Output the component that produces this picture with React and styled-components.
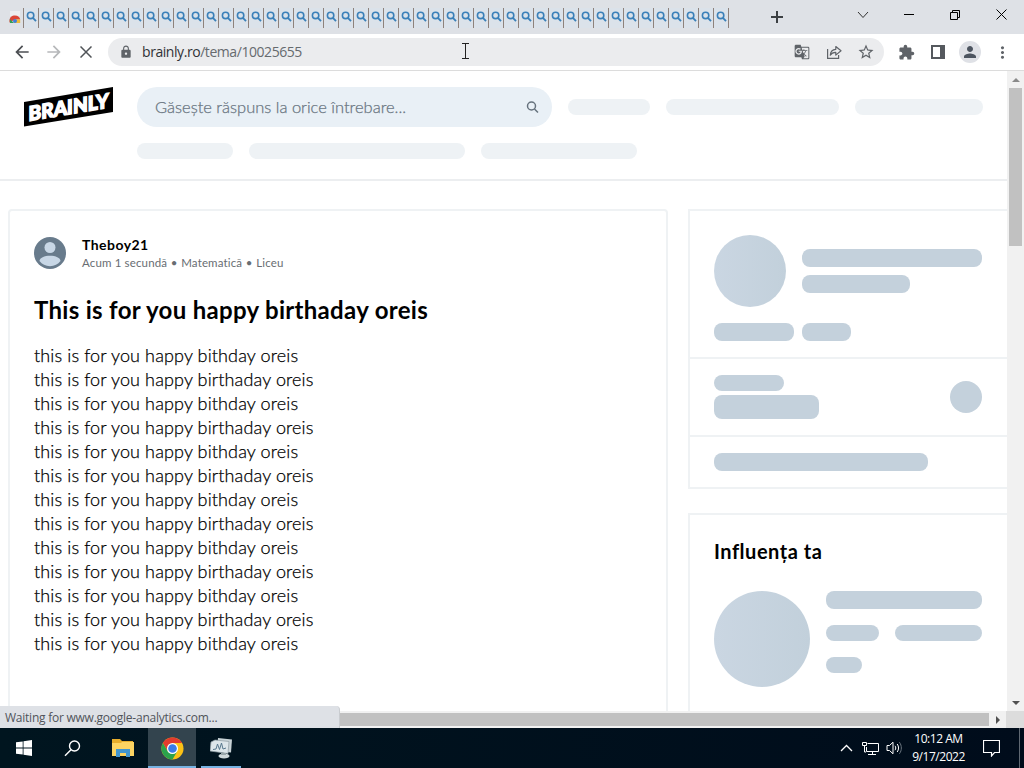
import React from 'react';
import styled, { createGlobalStyle } from 'styled-components';
import { MdArrowBack, MdArrowForward, MdLock, MdGTranslate, MdStarBorder, MdExtension, MdPerson, MdMoreVert } from 'react-icons/md';

const GlobalStyle = createGlobalStyle`
  * {
    box-sizing: border-box;
  }
  body {
    margin: 0;
    overflow: hidden;
  }
  svg {
    display: block;
    flex: none;
  }
`;

const Screen = styled.div`
  position: relative;
  display: flex;
  flex-direction: column;
  width: 1024px;
  height: 768px;
  overflow: hidden;
  background: #fff;
  font-family: 'Open Sans', 'Noto Sans', sans-serif;
`;

/* browser chrome */

const TabStrip = styled.div`
  display: flex;
  flex: none;
  height: 34px;
  background: #dee1e6;
`;

const FirstTab = styled.div`
  display: flex;
  align-items: center;
  justify-content: flex-end;
  width: 23px;
  padding-right: 2px;
`;

const Tabs = styled.div`
  display: flex;
  height: 20px;
  margin-top: 8px;
  border-left: 1px solid #8e827c;
`;

const Tab = styled.div`
  display: flex;
  align-items: flex-start;
  justify-content: center;
  width: 15px;
  padding-top: 3px;
  background: #dbe2ea;
  border-right: 1px solid #8e827c;
`;

const NewTab = styled.div`
  display: flex;
  align-items: center;
  justify-content: center;
  width: 96px;
`;

const WindowButtons = styled.div`
  display: flex;
  height: 29px;
  margin-left: auto;
`;

const WindowButton = styled.div`
  display: flex;
  align-items: center;
  justify-content: center;
  width: 46px;
`;

const Toolbar = styled.div`
  display: flex;
  flex: none;
  align-items: center;
  height: 37px;
  padding: 0 6px;
  border-bottom: 1px solid #dcdcdc;
`;

const Slot = styled.div`
  display: flex;
  align-items: center;
  justify-content: center;
  width: 32px;
  height: 28px;
  color: ${({ $color }) => $color || '#5f6368'};
`;

const Omnibox = styled.div`
  display: flex;
  flex: 1;
  align-items: center;
  height: 28px;
  margin: 0 6px;
  padding: 0 2px 0 11px;
  border-radius: 14px;
  background: #ebecee;
  color: #5f6368;
`;

const Url = styled.div`
  flex: 1;
  margin-left: 9px;
  padding-bottom: 1px;
  font-size: 14px;
  letter-spacing: -0.44px;
  color: #666a6e;

  span {
    color: #303236;
  }
`;

const Profile = styled.div`
  display: flex;
  align-items: center;
  justify-content: center;
  width: 22px;
  height: 22px;
  border-radius: 50%;
  background: #dfe1e6;
  color: #4d5560;
`;

/* page */

const Viewport = styled.div`
  display: flex;
  flex: none;
  height: 640px;
`;

const Page = styled.div`
  width: 1007px;
  overflow: hidden;
  font-family: Lato, sans-serif;
`;

const Header = styled.header`
  display: flex;
  height: 110px;
  padding: 16px 24px 0;
  border-bottom: 2px solid #eceef0;
`;

const Nav = styled.div`
  display: flex;
  flex-wrap: wrap;
  align-content: flex-start;
  align-items: center;
  gap: 16px;
  width: 847px;
  margin-left: 24px;
`;

const SearchBox = styled.div`
  display: flex;
  align-items: center;
  justify-content: space-between;
  width: 415px;
  height: 40px;
  padding: 0 13px 0 18px;
  border-radius: 20px;
  background: #e9f0f6;
  color: #687480;
  font-size: 16.5px;
  font-weight: 300;
  -webkit-text-stroke: 0.25px #687480;
`;

const Bar = styled.div`
  flex: none;
  width: ${({ $w }) => $w}px;
  height: ${({ $h }) => $h || 18}px;
  border-radius: ${({ $r }) => $r || 8}px;
  background: ${({ $light }) => ($light ? '#eef2f5' : '#c4d1dc')};
`;

const Circle = styled.div`
  flex: none;
  width: ${({ $size }) => $size}px;
  height: ${({ $size }) => $size}px;
  border-radius: 50%;
  background: ${({ $shade }) => ($shade ? 'linear-gradient(90deg, #cad6e2, #c2d0db)' : '#c4d1dc')};
`;

const Columns = styled.div`
  display: flex;
  gap: 20px;
  padding: 28px 0 0 8px;
`;

const Question = styled.main`
  flex: none;
  width: 660px;
  height: 700px;
  padding: 26px 24px;
  border: 2px solid #eff2f4;
  border-radius: 4px;
`;

const Author = styled.div`
  display: flex;
  gap: 16px;
  height: 34px;
`;

const Name = styled.div`
  margin-top: -1px;
  font-size: 14px;
  line-height: 18px;
  font-weight: 700;
  letter-spacing: 0.45px;
`;

const Meta = styled.div`
  display: flex;
  font-size: 11.5px;
  line-height: 17px;
  letter-spacing: 0.15px;
  color: #686d72;

  span + span::before {
    content: '•';
    display: inline-block;
    width: 14px;
    text-align: center;
  }
`;

const Title = styled.h1`
  margin: 23px 0 17px;
  font-size: 24px;
  line-height: 32px;
  font-weight: 700;
  letter-spacing: 0.3px;
  white-space: nowrap;
`;

const Body = styled.div`
  font-size: 18px;
  line-height: 24px;
  font-weight: 300;
  letter-spacing: 0.13px;
  color: #000;
  -webkit-text-stroke: 0.25px #000;
`;

const Aside = styled.aside`
  display: flex;
  flex: none;
  flex-direction: column;
  gap: 24px;
  width: 340px;
`;

const Box = styled.section`
  border: 2px solid #eff2f4;
  border-right: 0;
  height: ${({ $h }) => $h}px;
`;

const Section = styled.div`
  display: flex;
  flex-direction: ${({ $row }) => ($row ? 'row' : 'column')};
  justify-content: ${({ $row }) => ($row ? 'space-between' : 'flex-start')};
  align-items: ${({ $row }) => ($row ? 'center' : 'stretch')};
  height: ${({ $h }) => $h}px;
  padding: ${({ $pad }) => $pad};
  gap: 16px;

  & + & {
    border-top: 2px solid #eff2f4;
  }
`;

const Row = styled.div`
  display: flex;
  gap: ${({ $gap }) => $gap || 16}px;
`;

const Stack = styled.div`
  display: flex;
  flex-direction: column;
  gap: ${({ $gap }) => $gap}px;
  padding-top: ${({ $top }) => $top || 0}px;
`;

const BoxTitle = styled.h2`
  margin: -2px 0 26px;
  font-size: 20px;
  line-height: 28px;
  font-weight: 700;
  letter-spacing: 0.52px;
`;

/* scrollbars */

const VScroll = styled.div`
  display: flex;
  flex-direction: column;
  align-items: center;
  justify-content: space-between;
  width: 17px;
  background: #f1f1f1;
`;

const VThumb = styled.div`
  width: 13px;
  height: 158px;
  margin-bottom: auto;
  background: #c1c1c1;
`;

const ArrowBox = styled.div`
  display: flex;
  align-items: center;
  justify-content: center;
  width: 17px;
  height: 17px;
`;

const HScroll = styled.div`
  display: flex;
  flex: none;
  align-items: center;
  height: 17px;
  background: #f1f1f1;
`;

const HThumb = styled.div`
  width: 972px;
  height: 13px;
  margin-left: 17px;
  background: #c1c1c1;
`;

const Corner = styled.div`
  width: 18px;
  height: 17px;
  background: #dcdcdc;
`;

const StatusBubble = styled.div`
  position: absolute;
  left: 0;
  top: 706px;
  width: 340px;
  height: 22px;
  padding-left: 5px;
  border-right: 1px solid #c9ccd0;
  border-radius: 0 4px 0 0;
  background: #dee1e6;
  color: #50545a;
  font-size: 12px;
  line-height: 23px;
  letter-spacing: -0.24px;
`;

/* taskbar */

const Taskbar = styled.div`
  display: flex;
  flex: none;
  height: 40px;
  background: linear-gradient(90deg, #00151f, #000c1b);
  color: #fff;
`;

const TaskButton = styled.div`
  display: flex;
  align-items: center;
  justify-content: center;
  width: ${({ $w }) => $w || 48}px;
  height: 40px;
  margin-right: ${({ $mr }) => $mr || 0}px;
  padding-top: ${({ $open }) => ($open ? 2 : 0)}px;
  background: ${({ $active }) => ($active ? '#33444e' : 'transparent')};
  border-bottom: ${({ $open }) => ($open ? '2px solid #76b2e2' : '0')};
`;

const Tray = styled.div`
  display: flex;
  align-items: center;
  margin-left: auto;
`;

const TrayIcon = styled.div`
  display: flex;
  justify-content: center;
  width: ${({ $w }) => $w}px;
`;

const Clock = styled.div`
  width: 69px;
  padding-right: 4px;
  font-size: 12px;
  line-height: 18px;
  letter-spacing: -0.46px;
  text-align: center;
  white-space: nowrap;
`;

const ShowDesktop = styled.div`
  width: 5px;
  height: 40px;
  margin-left: 12px;
  border-left: 1px solid #5f6872;
`;

const ChromeLogo = () => (
  <svg width="23" height="23" viewBox="0 0 48 48">
    <circle cx="24" cy="24" r="23" fill="#fbc116" />
    <path d="M24 24 14 29.7 4 12.5A23 23 0 0 1 43.9 12.5H24z" fill="#e33b2e" />
    <path d="M4 12.5 14 29.7 24 35.5 34 29.7 24 47A23 23 0 0 1 4 12.5z" fill="#2ba24c" />
    <circle cx="24" cy="24" r="11.5" fill="#fff" />
    <circle cx="24" cy="24" r="9" fill="#3a7be8" />
  </svg>
);

const TabSearch = () => (
  <svg width="11" height="12" viewBox="0 0 11 12" fill="none" stroke="#3b80b9">
    <circle cx="4.6" cy="4.4" r="3.2" strokeWidth="1.6" />
    <path d="M6.9 6.8 10 10.2" strokeWidth="1.8" />
  </svg>
);

const StoreIcon = () => (
  <svg width="12" height="14" viewBox="0 0 12 14">
    <path d="M1 1h10v5H1z" fill="#edeef0" />
    <path d="M.5 12.500C0 7 3 5.500 6 5.500s5 2 5.200 4H6z" fill="#db4637" />
    <path d="M.8 9 5 13H1z" fill="#339e56" />
    <path d="M6 9.500h5.200V13H5z" fill="#efbb35" />
    <circle cx="6" cy="11" r="2" fill="#427fd7" />
  </svg>
);

const Logo = () => (
  <svg width="89" height="40" viewBox="0 0 89 40">
    <path d="M0 15 89 0v25L0 39.500z" fill="#000" />
    <text
      transform="translate(4.500 34) skewY(-9.5)"
      fill="#fff"
      stroke="#fff"
      strokeWidth="1.500"
      fontFamily="Lato, sans-serif"
      fontWeight="900"
      fontSize="20"
      textLength="80"
      lengthAdjust="spacingAndGlyphs"
    >
      BRAINLY
    </text>
  </svg>
);

const Avatar = () => (
  <svg width="32" height="32" viewBox="0 0 32 32">
    <circle cx="16" cy="16" r="16" fill="#687b8c" />
    <circle cx="16" cy="10.500" r="5.500" fill="#c8d7e6" />
    <path d="M5.500 24c0-3.300 5-5.300 10.500-5.300s10.500 2 10.500 5.300c-2.500 3.300-6.200 5.200-10.500 5.200S8 27.300 5.500 24z" fill="#c8d7e6" />
  </svg>
);

const Arrow = ({ turn, color = '#505050' }) => (
  <svg width="8" height="8" viewBox="0 0 8 8">
    <path d="M0 6 4 2l4 4z" fill={color} transform={`rotate(${turn} 4 4)`} />
  </svg>
);

const tabs = Array.from({ length: 47 }, (_, i) => i);

const lines = Array.from({ length: 13 }, (_, i) =>
  i % 2 ? 'this is for you happy birthaday oreis' : 'this is for you happy bithday oreis'
);

const BrowserTop = () => (
  <>
    <TabStrip>
      <FirstTab>
        <StoreIcon />
      </FirstTab>
      <Tabs>
        {tabs.map((i) => (
          <Tab key={i}>
            <TabSearch />
          </Tab>
        ))}
      </Tabs>
      <NewTab>
        <svg width="12" height="12" viewBox="0 0 12 12">
          <path d="M6 0v12M0 6h12" stroke="#3c4043" strokeWidth="2" />
        </svg>
      </NewTab>
      <WindowButtons>
        <WindowButton>
          <svg width="12" height="8" viewBox="0 0 12 8">
            <path d="M1 1l5 5.500L11 1" fill="none" stroke="#333" />
          </svg>
        </WindowButton>
        <WindowButton>
          <svg width="10" height="1">
            <path d="M0 0h10v1H0z" fill="#000" />
          </svg>
        </WindowButton>
        <WindowButton>
          <svg width="10" height="10" viewBox="0 0 10 10">
            <path d="M.5 2.500h7v7h-7zM2.500 2.500v-2h7v7h-2" fill="none" stroke="#000" />
          </svg>
        </WindowButton>
        <WindowButton>
          <svg width="11" height="11" viewBox="0 0 11 11">
            <path d="M.5.5l10 10M10.500.5l-10 10" stroke="#000" />
          </svg>
        </WindowButton>
      </WindowButtons>
    </TabStrip>
    <Toolbar>
      <Slot $color="#4c4f53">
        <MdArrowBack size={20} />
      </Slot>
      <Slot $color="#b6b8ba">
        <MdArrowForward size={20} />
      </Slot>
      <Slot>
        <svg width="12" height="12" viewBox="0 0 12 12">
          <path d="M.5.500l11 11M11.500.5l-11 11" stroke="#505458" strokeWidth="1.500" />
        </svg>
      </Slot>
      <Omnibox>
        <MdLock size={14} />
        <Url>
          <span>brainly.ro</span>/tema/10025655
        </Url>
        <Slot>
          <MdGTranslate size={16} />
        </Slot>
        <Slot>
          <svg width="16" height="16" viewBox="0 0 16 16" fill="none" stroke="#5f6368" strokeWidth="1.200">
            <path d="M1.600 5v9.400h11V11" />
            <path d="M4.300 11.200C4.500 7.500 6.500 5.500 9.800 5.300V2.500l5.200 4.300-5.200 4.300V8.400C7.300 8.300 5.500 9.200 4.300 11.200z" strokeLinejoin="round" />
          </svg>
        </Slot>
        <Slot>
          <MdStarBorder size={18} />
        </Slot>
      </Omnibox>
      <Slot>
        <MdExtension size={17} />
      </Slot>
      <Slot>
        <svg width="14" height="14" viewBox="0 0 14 14">
          <path d="M0 0h14v14H0zM2 2v10h7V2z" fill="#55595e" fillRule="evenodd" />
        </svg>
      </Slot>
      <Slot>
        <Profile>
          <MdPerson size={18} />
        </Profile>
      </Slot>
      <Slot>
        <MdMoreVert size={19} />
      </Slot>
    </Toolbar>
  </>
);

const SiteHeader = () => (
  <Header>
    <Logo />
    <Nav>
      <SearchBox>
        Găsește răspuns la orice întrebare...
        <svg width="13" height="13" viewBox="0 0 13 13" fill="none" stroke="#66727d" strokeWidth="1.500">
          <circle cx="5.500" cy="5" r="4" />
          <path d="M8.500 8 12 11.500" />
        </svg>
      </SearchBox>
      <Bar $w={82} $h={16} $light />
      <Bar $w={173} $h={16} $light />
      <Bar $w={128} $h={16} $light />
      <Bar $w={96} $h={16} $light />
      <Bar $w={216} $h={16} $light />
      <Bar $w={156} $h={16} $light />
    </Nav>
  </Header>
);

const QuestionCard = () => (
  <Question>
    <Author>
      <Avatar />
      <div>
        <Name>Theboy21</Name>
        <Meta>
          <span>Acum 1 secundă</span>
          <span>Matematică</span>
          <span>Liceu</span>
        </Meta>
      </div>
    </Author>
    <Title>This is for you happy birthaday oreis</Title>
    <Body>
      {lines.map((line, i) => (
        <div key={i}>{line}</div>
      ))}
    </Body>
  </Question>
);

const Sidebar = () => (
  <Aside>
    <Box $h={280}>
      <Section $h={146} $pad="24px">
        <Row>
          <Circle $size={72} $shade />
          <Stack $gap={8} $top={14}>
            <Bar $w={180} />
            <Bar $w={108} />
          </Stack>
        </Row>
        <Row $gap={8}>
          <Bar $w={80} />
          <Bar $w={49} />
        </Row>
      </Section>
      <Section $row $h={78} $pad="0 46px 0 24px">
        <Stack $gap={4}>
          <Bar $w={70} $h={16} />
          <Bar $w={105} $h={24} />
        </Stack>
        <Circle $size={32} />
      </Section>
      <Section $h={52} $pad="16px 24px">
        <Bar $w={214} />
      </Section>
    </Box>
    <Box $h={300}>
      <Section $h={290} $pad="24px">
        <div>
          <BoxTitle>Influența ta</BoxTitle>
          <Row>
            <Circle $size={96} $shade />
            <Stack $gap={16}>
              <Bar $w={156} />
              <Row>
                <Bar $w={53} $h={16} />
                <Bar $w={87} $h={16} />
              </Row>
              <Bar $w={36} $h={16} />
            </Stack>
          </Row>
        </div>
      </Section>
    </Box>
  </Aside>
);

const TaskbarRow = () => (
  <Taskbar>
    <TaskButton>
      <svg width="16" height="16" viewBox="0 0 16 16">
        <path d="M0 2.300 6.700 1.400v6.200H0zM7.500 1.300 16 0v7.600H7.500zM0 8.400h6.700v6.200L0 13.700zM7.500 8.400H16V16l-8.500-1.300z" fill="#fff" />
      </svg>
    </TaskButton>
    <TaskButton $mr={3}>
      <svg width="17" height="17" viewBox="0 0 17 17" fill="none" stroke="#fff" strokeWidth="1.400">
        <circle cx="10.500" cy="6" r="5" />
        <path d="M7 9.700 1 15.700" />
      </svg>
    </TaskButton>
    <TaskButton $mr={1}>
      <svg width="22" height="18" viewBox="0 0 22 18">
        <path d="M0 0h8l2 2h11v4H0z" fill="#e6ad2c" />
        <path d="M0 4h9l1-1h12v14H0z" fill="#fcd462" />
        <path d="M4 18v-8h14v8h-4v-4H8v4z" fill="#4296cf" />
      </svg>
    </TaskButton>
    <TaskButton $active $open $mr={5}>
      <ChromeLogo />
    </TaskButton>
    <TaskButton $w={40} $open>
      <svg width="23" height="21" viewBox="0 0 23 21">
        <path d="M8 0l14 1.500-1 13L7 13z" fill="#c8d2d6" />
        <path d="M1 4l4-2 14 1.500-1 12L0 13z" fill="#dde6ea" stroke="#8f9da4" strokeWidth="0.700" />
        <path d="M3 11.500l3-.5 1.500-5 2 5.500 2-6.500 1.500 6 3-1" fill="none" stroke="#58788d" />
        <ellipse cx="14" cy="18" rx="5.500" ry="2.500" fill="#cfd8da" />
        <path d="M11 15h5v2h-5z" fill="#9aa7ab" />
      </svg>
    </TaskButton>
    <Tray>
      <TrayIcon $w={24}>
        <svg width="13" height="8" viewBox="0 0 13 8">
          <path d="M1 7l5.500-5.500L12 7" fill="none" stroke="#fff" strokeWidth="1.300" />
        </svg>
      </TrayIcon>
      <TrayIcon $w={24}>
        <svg width="17" height="15" viewBox="0 0 17 15" fill="none" stroke="#fff">
          <path d="M5.500 2.500h11v8h-12V6M10.500 11v2.500M6 13.500h8" />
          <path d="M.5 1.500h4v3h-4zM2.500 5v6H4" />
        </svg>
      </TrayIcon>
      <TrayIcon $w={24}>
        <svg width="17" height="14" viewBox="0 0 17 14" fill="none" stroke="#fff">
          <path d="M1 4.500h2.500L7 1.200v11.600L3.500 9.500H1z" />
          <path d="M9 4.800c1 1.300 1 3.100 0 4.400M11.200 3c1.800 2.400 1.800 5.600 0 8" />
          <path d="M13.400 1.200c2.600 3.600 2.600 8 0 11.600" stroke="#6a747e" />
        </svg>
      </TrayIcon>
      <Clock>
        10:12 AM
        <br />
        9/17/2022
      </Clock>
      <TrayIcon $w={32}>
        <svg width="17" height="17" viewBox="0 0 17 17">
          <path d="M.5.500h16v12h-5L8.500 16v-3.500h-8z" fill="none" stroke="#fff" strokeWidth="1.200" />
        </svg>
      </TrayIcon>
      <ShowDesktop />
    </Tray>
  </Taskbar>
);

const Cursor = styled.svg`
  position: absolute;
  left: 461px;
  top: 43px;
`;

const App = () => (
  <Screen>
    <GlobalStyle />
    <BrowserTop />
    <Viewport>
      <Page>
        <SiteHeader />
        <Columns>
          <QuestionCard />
          <Sidebar />
        </Columns>
      </Page>
      <VScroll>
        <ArrowBox>
          <Arrow turn={0} color="#8a8a8a" />
        </ArrowBox>
        <VThumb />
        <ArrowBox>
          <Arrow turn={180} />
        </ArrowBox>
      </VScroll>
    </Viewport>
    <HScroll>
      <HThumb />
      <ArrowBox>
        <Arrow turn={90} />
      </ArrowBox>
      <Corner />
    </HScroll>
    <TaskbarRow />
    <StatusBubble>Waiting for www.google-analytics.com...</StatusBubble>
    <Cursor width="9" height="17" viewBox="0 0 9 17">
      <path d="M1 .5h7M1 15.500h7M4.500 1v14" fill="none" stroke="#222" />
    </Cursor>
  </Screen>
);

export default App;
